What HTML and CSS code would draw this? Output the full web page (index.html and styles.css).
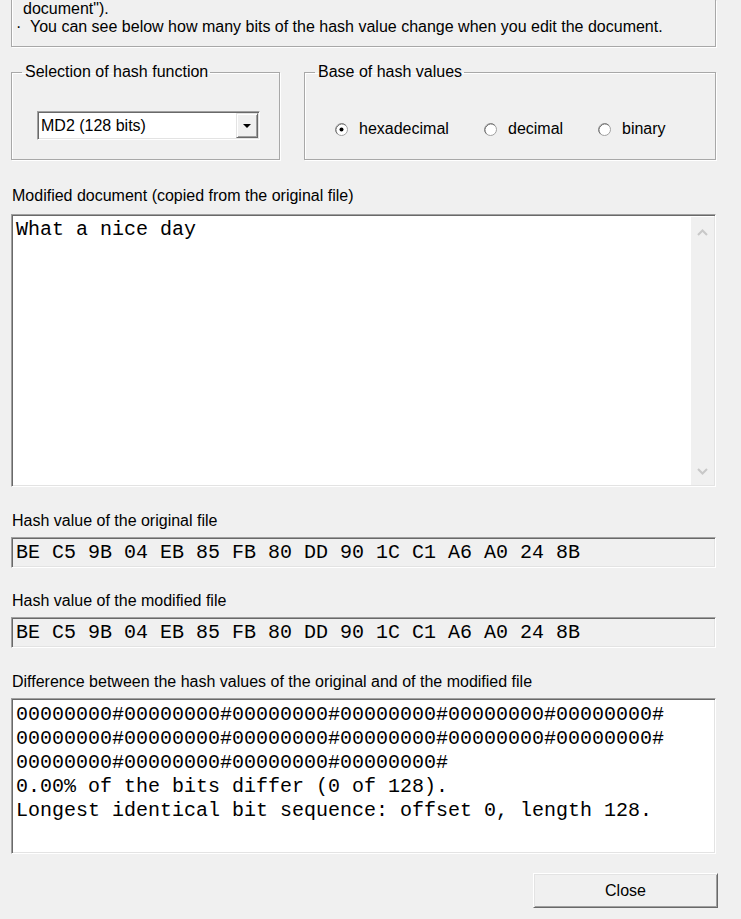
FILE: index.html
```html
<!DOCTYPE html>
<html>
<head>
<meta charset="utf-8">
<link rel="stylesheet" href="styles.css">
</head>
<body>
<div class="dialog">
  <div class="info">
    <div class="info-line indent">document").</div>
    <div class="info-line">·&nbsp; You can see below how many bits of the hash value change when you edit the document.</div>
  </div>

  <div class="groups">
    <fieldset class="group group-hash">
      <legend>Selection of hash function</legend>
      <div class="combo">
        <span class="combo-text">MD2 (128 bits)</span>
        <span class="combo-btn"><svg width="8" height="4" viewBox="0 0 8 4"><path d="M0 0h8L4 4z" fill="#000"/></svg></span>
      </div>
    </fieldset>
    <fieldset class="group group-base">
      <legend>Base of hash values</legend>
      <div class="radios">
        <label class="radio r-hex"><svg class="rb" width="13" height="13" viewBox="0 0 13 13"><circle cx="6.5" cy="6.5" r="6" fill="#fff" stroke="#a0a0a0"/><path d="M2.3 10.7A6 6 0 0 1 10.7 2.3" stroke="#696969" fill="none"/><circle cx="6.5" cy="6.5" r="2" fill="#000"/></svg><span>hexadecimal</span></label>
        <label class="radio r-dec"><svg class="rb" width="13" height="13" viewBox="0 0 13 13"><circle cx="6.5" cy="6.5" r="6" fill="#fff" stroke="#a0a0a0"/><path d="M2.3 10.7A6 6 0 0 1 10.7 2.3" stroke="#696969" fill="none"/></svg><span>decimal</span></label>
        <label class="radio r-bin"><svg class="rb" width="13" height="13" viewBox="0 0 13 13"><circle cx="6.5" cy="6.5" r="6" fill="#fff" stroke="#a0a0a0"/><path d="M2.3 10.7A6 6 0 0 1 10.7 2.3" stroke="#696969" fill="none"/></svg><span>binary</span></label>
      </div>
    </fieldset>
  </div>

  <div class="label label-doc">Modified document (copied from the original file)</div>
  <div class="doc sunken">
    <div class="doc-text">What a nice day</div>
    <div class="vscroll">
      <svg width="11" height="7" viewBox="0 0 11 7"><path d="M1 6L5.5 1.5L10 6" stroke="#c8c8c8" stroke-width="2" fill="none"/></svg>
      <svg width="11" height="7" viewBox="0 0 11 7"><path d="M1 1L5.5 5.5L10 1" stroke="#c8c8c8" stroke-width="2" fill="none"/></svg>
    </div>
  </div>

  <div class="label label-h1">Hash value of the original file</div>
  <div class="field sunken">BE C5 9B 04 EB 85 FB 80 DD 90 1C C1 A6 A0 24 8B</div>

  <div class="label">Hash value of the modified file</div>
  <div class="field sunken">BE C5 9B 04 EB 85 FB 80 DD 90 1C C1 A6 A0 24 8B</div>

  <div class="label label-diff">Difference between the hash values of the original and of the modified file</div>
  <div class="diff sunken">
    <div>00000000#00000000#00000000#00000000#00000000#00000000#</div>
    <div>00000000#00000000#00000000#00000000#00000000#00000000#</div>
    <div>00000000#00000000#00000000#00000000#</div>
    <div>0.00% of the bits differ (0 of 128).</div>
    <div>Longest identical bit sequence: offset 0, length 128.</div>
  </div>

  <div class="actions">
    <button class="btn">Close</button>
  </div>
</div>
</body>
</html>
```
FILE: styles.css
```css
* { box-sizing: border-box; }
html, body { margin: 0; padding: 0; background: #f0f0f0; }
body {
  font-family: "Liberation Sans", Arial, sans-serif;
  font-size: 16px;
  color: #000;
  width: 741px;
  height: 919px;
  overflow: hidden;
}
.dialog { padding: 0 25px 0 11px; }

.info {
  height: 47px;
  border: 1px solid #a8a8a8;
  border-top: none;
  box-shadow: 1px 1px 0 #fff, inset 1px 0 0 #fff;
  padding: 0 0 0 4px;
  line-height: 18px;
}
.info-line.indent { padding-left: 7px; }

.groups {
  display: flex;
  gap: 24px;
  margin-top: 16px;
}
.group {
  margin: 0;
  padding: 0;
  min-width: 0;
  border: 1px solid #a8a8a8;
  box-shadow: inset 1px 1px 0 #fff, 1px 1px 0 #fff;
  height: 97px;
}
.group legend {
  padding: 0 2px 0 3px;
  margin-left: 10px;
  line-height: 18px;
}
.group-hash { width: 269px; }
.group-base { width: 412px; }

.combo {
  margin: 30px 0 0 25px;
  width: 223px;
  height: 29px;
  background: #fff;
  border: 1px solid;
  border-color: #a0a0a0 #fff #fff #a0a0a0;
  box-shadow: inset 1px 1px 0 #696969, inset -1px -1px 0 #e3e3e3;
  display: flex;
  align-items: center;
  justify-content: space-between;
  padding: 1px 1px 1px 3px;
}
.combo-text { line-height: 18px; }
.combo-btn {
  width: 22px;
  height: 25px;
  background: #f0f0f0;
  border: 1px solid;
  border-color: #e3e3e3 #696969 #696969 #e3e3e3;
  box-shadow: inset 1px 1px 0 #fff, inset -1px -1px 0 #a0a0a0;
  display: flex;
  align-items: center;
  justify-content: center;
}
.combo-btn svg { display: block; }

.radios {
  display: flex;
  align-items: center;
  margin: 39px 0 0 30px;
  height: 18px;
}
.radio { display: flex; align-items: center; gap: 11px; }
.r-hex { width: 149px; }
.r-dec { width: 114px; }
.rb { display: block; flex: none; }

.label { height: 18px; line-height: 18px; margin-top: 24px; padding-left: 1px; }
.label-doc { margin-top: 27px; }
.label-h1 { margin-top: 25px; }
.label-diff { margin-top: 25px; }

.sunken {
  border: 1px solid;
  border-color: #a0a0a0 #fff #fff #a0a0a0;
  box-shadow: inset 1px 1px 0 #696969, inset -1px -1px 0 #e3e3e3;
}
.mono, .doc, .field, .diff {
  font-family: "Courier New", "Nimbus Mono PS", "Nimbus Mono L", FreeMono, "Liberation Mono", monospace;
}
.doc {
  margin-top: 9px;
  height: 273px;
  background: #fff;
  display: flex;
  font-size: 20px;
}
.doc-text { flex: 1; padding: 3px 0 0 4px; line-height: 24px; }
.vscroll {
  width: 23px;
  margin: 2px 1px 1px 0;
  background: #f0f0f0;
  display: flex;
  flex-direction: column;
  justify-content: space-between;
  align-items: center;
  padding: 12px 0 10px 0;
}
.vscroll svg { display: block; }

.field {
  margin-top: 7px;
  height: 31px;
  background: #f0f0f0;
  font-size: 20px;
  line-height: 24px;
  padding: 3px 0 0 4px;
}

.diff {
  margin-top: 7px;
  height: 156px;
  background: #fff;
  font-size: 20px;
  line-height: 24px;
  padding: 4px 0 0 4px;
}

.actions { display: flex; justify-content: flex-end; margin-top: 19px; margin-right: -2px; }
.btn {
  width: 185px;
  height: 35px;
  font-family: inherit;
  font-size: 16px;
  color: #000;
  background: #f0f0f0;
  border: 1px solid;
  border-color: #fff #696969 #696969 #fff;
  box-shadow: inset 1px 1px 0 #e3e3e3, inset -1px -1px 0 #a0a0a0;
  padding: 0;
}
```
